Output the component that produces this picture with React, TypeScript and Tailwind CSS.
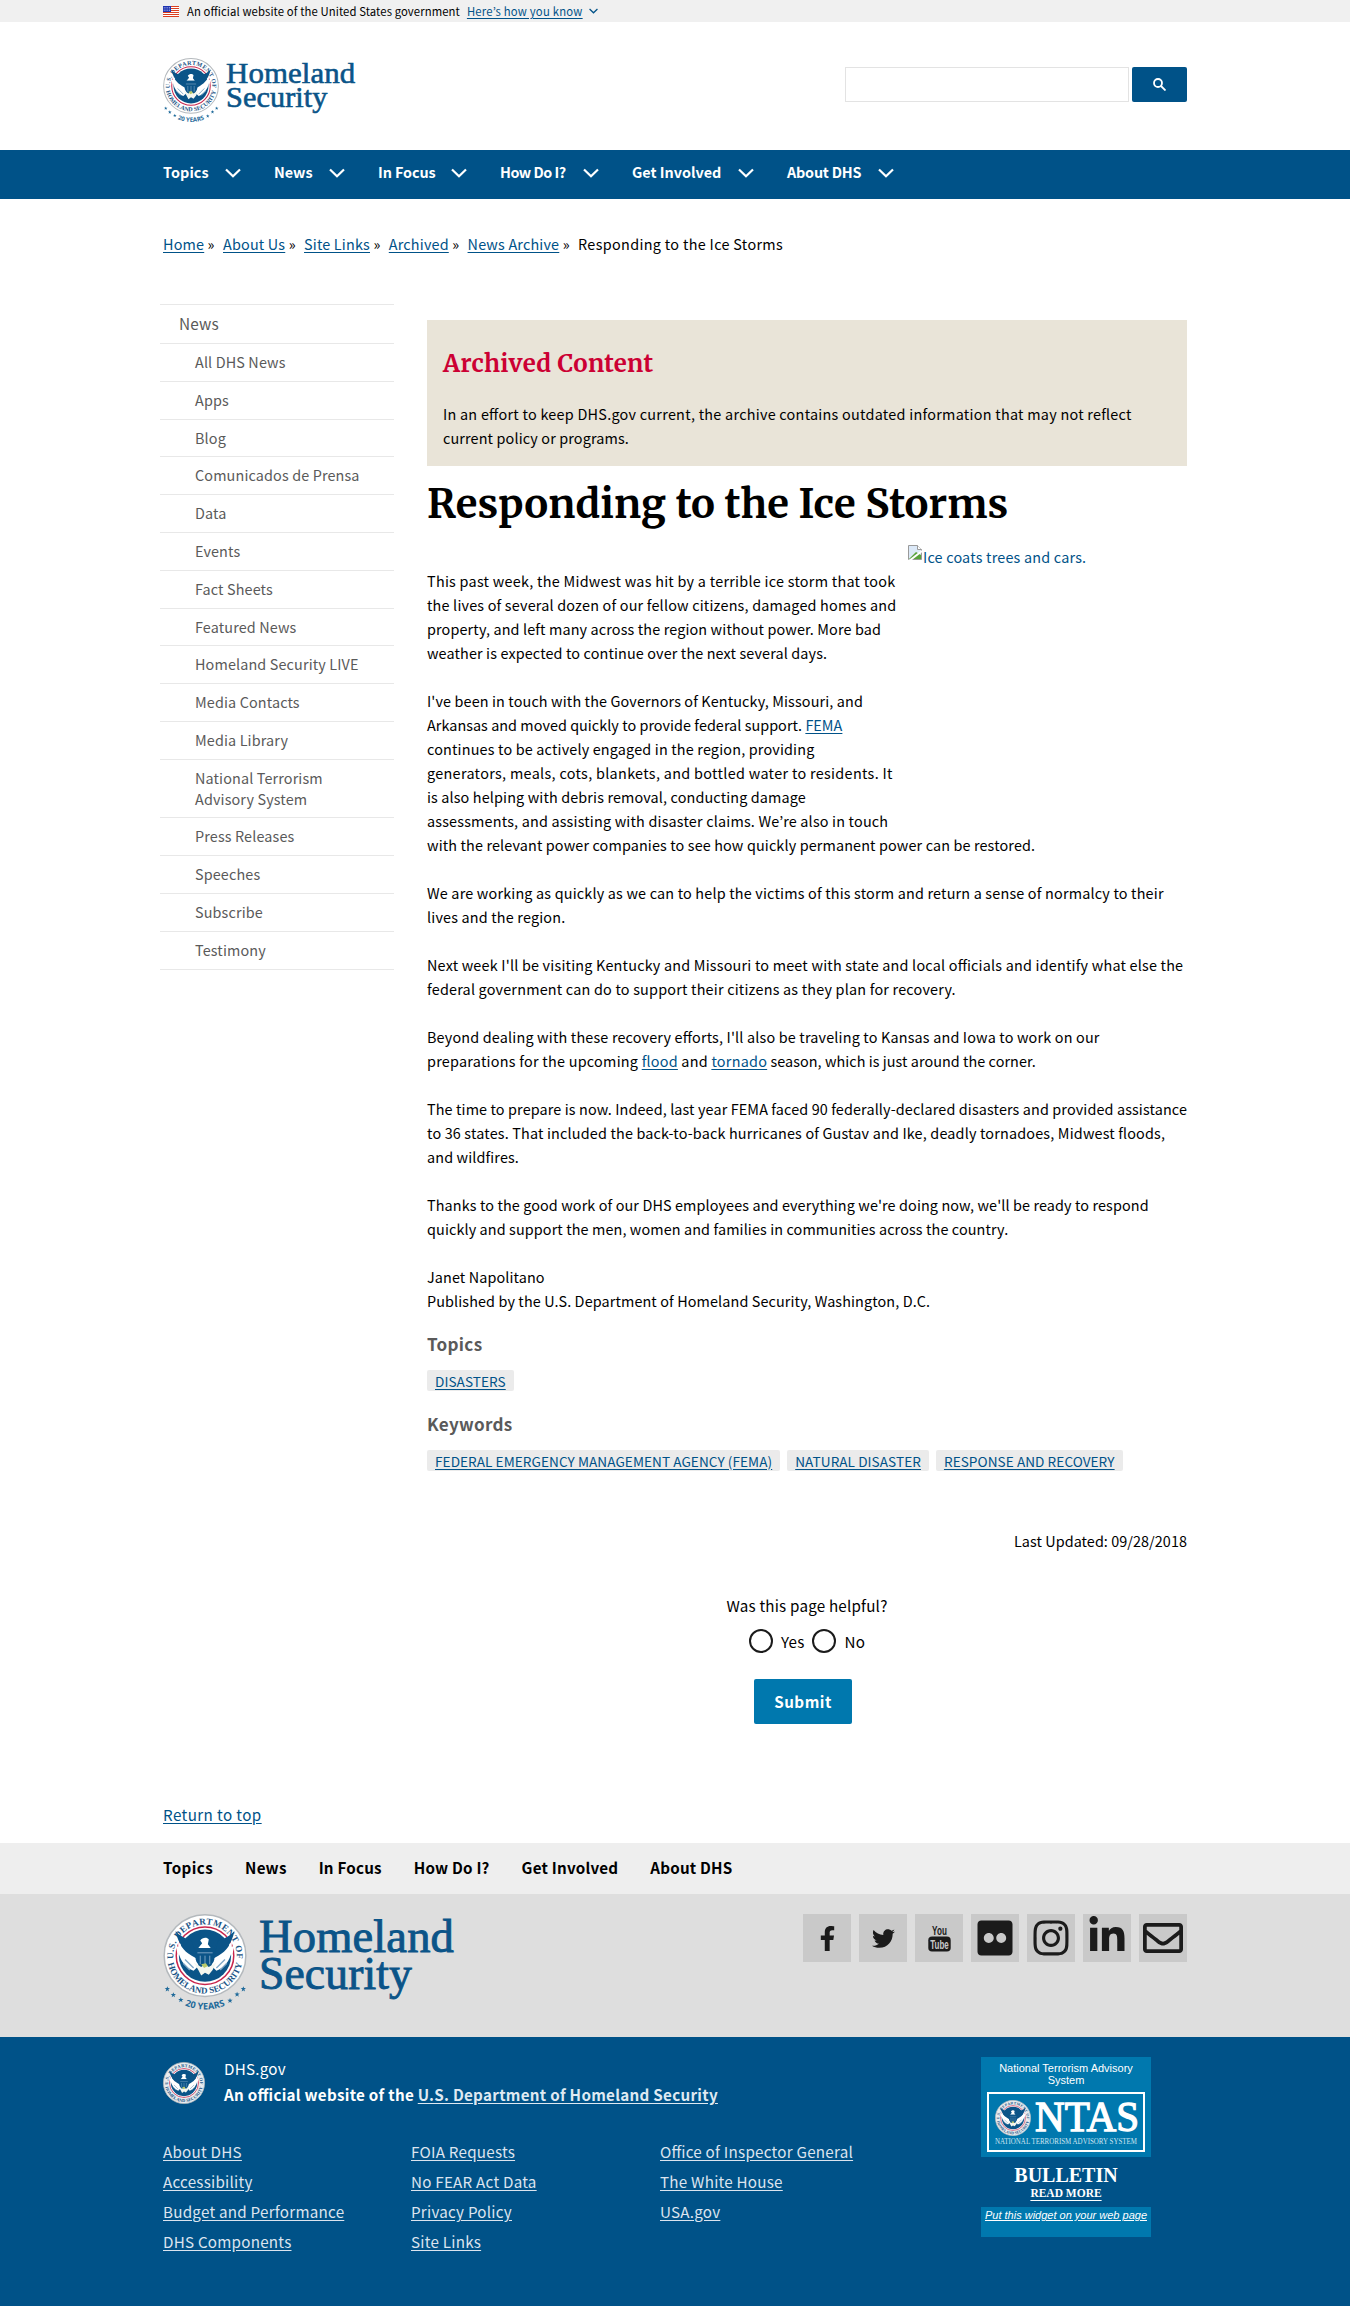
import type { ReactNode } from "react";
import { FaFacebookF, FaTwitter, FaFlickr, FaInstagram, FaLinkedinIn, FaRegEnvelope } from "react-icons/fa";

function Chevron({ className }: { className: string }) {
  return (
    <svg viewBox="0 0 16 10" className={className} fill="none" stroke="currentColor" strokeWidth="2.2">
      <path d="M1 1.5 8 8.2 15 1.5" />
    </svg>
  );
}

function Seal({ className, id, years = false, disc = "#fff" }: { className: string; id: string; years?: boolean; disc?: string }) {
  return (
    <svg viewBox={years ? "0 0 100 120" : "0 0 100 100"} overflow="visible" className={className}>
      <defs>
        <path id={`${id}-bottom`} d="M4.500 50 A45.500 45.500 0 0 0 95.500 50" />
        <path id={`${id}-upper`} d="M13.500 61 A38 38 0 1 1 86.500 61" />
        <path id={`${id}-years`} d="M-14.500 50 A64.500 64.500 0 0 0 114.500 50" />
      </defs>
      <circle cx="50" cy="50" r="49" fill={disc} stroke="#b4b9bd" strokeWidth="1.8" />
      <g fill="#1b5486" fontFamily="'Liberation Serif', serif" fontWeight="700">
        <text fontSize="10.8">
          <textPath href={`#${id}-upper`} startOffset="50%" textAnchor="middle" textLength="126">U.S. DEPARTMENT OF</textPath>
        </text>
        <text fontSize="10.8">
          <textPath href={`#${id}-bottom`} startOffset="50%" textAnchor="middle" textLength="124">HOMELAND SECURITY</textPath>
        </text>
      </g>
      <circle cx="50" cy="50" r="34.500" fill="#fff" stroke="#c8254c" strokeWidth="1.8" />
      {/* eagle: wings, head, shield and tail */}
      <g transform="translate(50 50) scale(1.14) translate(-50 -50)">
        <circle cx="50" cy="50" r="27.500" fill="#0b5488" />
        <path fill="#fff" d="M21 29c1 8 6 16 15 21l7 4v7l-5 5c-8-3-14-10-16-20l-1 2-2-9 3 2z" />
        <path fill="#fff" d="M79 29c-1 8-6 16-15 21l-7 4v7l5 5c8-3 14-10 16-20l1 2 2-9-3 2z" />
        <path fill="#0b5488" d="M19 24c4 5 10 8 17 10l4 14c-10-1-18-9-21-24z" />
        <path fill="#0b5488" d="M81 24c-4 5-10 8-17 10l-4 14c10-1 18-9 21-24z" />
        <path fill="#fff" d="M45 34c2-3 7-4 9-1l-1 5 3 4H43l4-5z" />
        <path fill="#0b5488" d="M40 42h20v10c0 6-5 10-10 12-5-2-10-6-10-12z" />
        <path stroke="#7fa7c6" strokeWidth="1" fill="none" d="M42 47h16M45 50v9M50 50v12M55 50v9" />
        <path fill="#f4f6ef" d="M38 57l8 5 4-3 4 3 8-5-4 8-4 5-4-2-4 3-3-6z" />
        <path fill="#b9c96a" d="M46 59l5-1 2 3-4 2z" />
        <path stroke="#7fa7c6" strokeWidth="1.4" fill="none" d="M27 58l7 7M29 54l9 9M73 58l-7 7M71 54l-9 9" />
      </g>
      {years && (
        <g fill="#1f6a9a">
          <text fontSize="11" fontWeight="700" fontFamily="'Noto Sans', sans-serif">
            <textPath href={`#${id}-years`} startOffset="50%" textAnchor="middle" textLength="50">20 YEARS</textPath>
          </text>
          {[[4.8, 90], [12, 97], [21, 103], [96, 90], [88.5, 96.5], [80, 104]].map(([x, y]) => (
            <path key={`${x}-${y}`} transform={`translate(${x} ${y}) scale(.36)`} d="M0-9 2.300-3h6.500L3.600 1.200 5.500 8 0 4-5.500 8-3.600 1.200-8.800-3h6.500z" />
          ))}
        </g>
      )}
    </svg>
  );
}

function Flag() {
  return (
    <svg viewBox="0 0 16 11" className="mr-2 h-[11px] w-4">
      <path fill="#fff" d="M0 0h16v11H0z" />
      <path stroke="#db3e1f" strokeWidth="1" d="M0 .5h16M0 2.500h16M0 4.500h16M0 6.500h16M0 8.500h16M0 10.500h16" />
      <path fill="#1e33b1" d="M0 0h8v6H0z" />
      <path stroke="#c7cdf0" strokeWidth=".8" strokeDasharray=".8 1" d="M.8 1.500h7M.8 3h7M.8 4.500h7" />
    </svg>
  );
}

function A({ children, className = "" }: { children: ReactNode; className?: string }) {
  return <a href="#" className={`text-[#005288] underline underline-offset-[2px] ${className}`}>{children}</a>;
}

function Wordmark({ className }: { className: string }) {
  return (
    <svg viewBox="0 0 196 92" overflow="visible" className={className} fill="#0b5488" stroke="#0b5488" strokeWidth=".9" fontFamily="'Liberation Serif', serif" fontSize="45.500">
      <text x="0" y="38" textLength="195" lengthAdjust="spacingAndGlyphs">Homeland</text>
      <text x="0" y="74.500" textLength="153" lengthAdjust="spacingAndGlyphs">Security</text>
    </svg>
  );
}

const topNav = [
  { label: "Topics", box: "w-[111px] tracking-[0.1px]" },
  { label: "News", box: "w-[104px] tracking-[0px]" },
  { label: "In Focus", box: "w-[122px] tracking-[-0.1px]" },
  { label: "How Do I?", box: "w-[132px] tracking-[-0.5px]" },
  { label: "Get Involved", box: "w-[155px] tracking-[0px]" },
  { label: "About DHS", box: "w-[140px] tracking-[-0.2px]" },
];
const crumbs = ["Home", "About Us", "Site Links", "Archived", "News Archive"];
const side = ["All DHS News", "Apps", "Blog", "Comunicados de Prensa", "Data", "Events", "Fact Sheets", "Featured News", "Homeland Security LIVE", "Media Contacts", "Media Library", "National Terrorism Advisory System", "Press Releases", "Speeches", "Subscribe", "Testimony"];
const keywords = ["FEDERAL EMERGENCY MANAGEMENT AGENCY (FEMA)", "NATURAL DISASTER", "RESPONSE AND RECOVERY"];
const footerCols = [
  ["About DHS", "Accessibility", "Budget and Performance", "DHS Components"],
  ["FOIA Requests", "No FEAR Act Data", "Privacy Policy", "Site Links"],
  ["Office of Inspector General", "The White House", "USA.gov"],
];

function Tag({ children }: { children: ReactNode }) {
  return (
    <span className="flex h-[21px] items-center rounded-[2px] bg-[#ebebeb] px-2 text-[13.6px] tracking-[0.06px]">
      <A>{children}</A>
    </span>
  );
}

function YouTube() {
  return (
    <svg viewBox="0 0 24 30" overflow="visible" className="h-[28px] w-[23px]" fontFamily="'Liberation Sans Narrow', 'Liberation Sans', sans-serif" fontWeight="700">
      <text x="4" y="12" fontSize="13.500" textLength="16" lengthAdjust="spacingAndGlyphs" fill="#1b1b1b">You</text>
      <rect x="0" y="13.500" width="24" height="16" rx="4" fill="#1b1b1b" />
      <text x="2" y="26.500" fontSize="13.500" textLength="20" lengthAdjust="spacingAndGlyphs" fill="#c9c9c9">Tube</text>
    </svg>
  );
}

function Social({ children }: { children: ReactNode }) {
  return <a href="#" className="flex h-12 w-12 items-center justify-center bg-[#c9c9c9] text-[#1b1b1b]">{children}</a>;
}

function Radio({ label }: { label: string }) {
  return (
    <label className="flex items-center gap-2">
      <span className="size-6 rounded-full border-2 border-[#1b1b1b] bg-white" />
      {label}
    </label>
  );
}

export default function App() {
  return (
    <div className="min-h-[2306px] bg-white font-['Noto_Sans_CJK_KR',sans-serif] text-[14.4px] leading-6 tracking-[0.13px] whitespace-nowrap text-black [font-feature-settings:'liga']">
      <div className="h-[22px] bg-[#f0f0f0]">
        <div className="mx-auto flex h-full w-[1024px] items-center text-[11.3px] tracking-[0.1px]">
          <Flag />
          <span>An official website of the United States government</span>
          <A className="ml-[7px] tracking-[0.22px]">Here’s how you know</A>
          <Chevron className="ml-1.5 h-[6px] w-[9px] text-[#005288]" />
        </div>
      </div>

      <header className="mx-auto flex h-32 w-[1024px] justify-between">
        <div className="flex pt-9">
          <Seal id="head" years className="h-[67px] w-[56px]" />
          <Wordmark className="ml-[7px] h-[61px] w-[130px]" />
        </div>
        <div className="flex items-start gap-[3px] pt-[45px]">
          <div className="h-[35px] w-[284px] border border-[#e3e3e3]" />
          <button className="flex h-[35px] w-[55px] items-center justify-center rounded-[2px] bg-[#005288]">
            <svg viewBox="0 0 13 13" className="size-[13px]" fill="none" stroke="#fff" strokeWidth="1.8">
              <circle cx="5" cy="5" r="4" />
              <path d="m8 8 4.500 4.500" />
            </svg>
          </button>
        </div>
      </header>

      <nav className="h-[49px] bg-[#005288]">
        <div className="mx-auto flex w-[1024px] pt-[10px] font-bold text-white">
          {topNav.map((t) => (
            <a key={t.label} href="#" className={`flex items-center justify-between pr-[33px] ${t.box}`}>
              {t.label}
              <Chevron className="h-[10px] w-4 translate-y-px" />
            </a>
          ))}
        </div>
      </nav>

      <div className="mx-auto flex w-[1024px] pt-[33px] tracking-[0.18px]">
        {crumbs.map((c) => (
          <span key={c} className="mr-[8.3px]"><A>{c}</A> »</span>
        ))}
        <span className="tracking-[0.33px]">Responding to the Ice Storms</span>
      </div>

      <div className="mx-auto flex w-[1030px] pr-[3px]">
        <aside className="mt-12 w-[234px] border-t border-[#e8e8e8] leading-[20.8px] tracking-[0.13px] text-[#5a5a5a]">
          <div className="border-b border-[#e8e8e8] px-[19px] pt-[7px] pb-[9px] text-[15.4px] leading-[22.1px]">News</div>
          {side.map((s) => (
            <div key={s} className="border-b border-[#e8e8e8] py-2 pr-5 pl-[35px] whitespace-normal">{s}</div>
          ))}
        </aside>

        <main className="mt-16 ml-[33px] w-[760px]">
          <div className="h-[146px] bg-[#e9e4d8] px-4">
            <h2 className="pt-[27px] font-[Merriweather,'Noto_Serif',serif] text-[24px] leading-[34px] font-bold tracking-[0.35px] text-[#cc0033]">Archived Content</h2>
            <p className="pt-[21px]">
              <span className="tracking-[0.26px]">In an effort to keep DHS.gov current, the archive contains outdated information that may not reflect</span>
              <br />
              current policy or programs.
            </p>
          </div>
          <h1 className="pt-[13px] font-[Merriweather,'Noto_Serif',serif] text-[40px] leading-[50px] font-bold tracking-[0.1px]">Responding to the Ice Storms</h1>
          <div className="float-right mt-[16px] flex h-[270px] w-[280px] text-[#005288]">
            <svg viewBox="0 0 16 16" className="size-4">
              <path fill="#dce9f8" stroke="#9a9a9a" d="M1.500 14.500v-14h9l4 4v10z" />
              <path fill="#fff" stroke="#9a9a9a" d="M10.500.5v4h4" />
              <path fill="#58a13a" d="M2 14l7-7 5 3v4z" />
              <path stroke="#fff" strokeWidth="2" d="m2 16 13-10" />
            </svg>
            <span className="tracking-[0.2px]">Ice coats trees and cars.</span>
          </div>
          <div className="space-y-6 pt-[40px]">
            <p>
              <span className="tracking-[0.26px]">This past week, the Midwest was hit by a terrible ice storm that took</span><br />
              <span className="tracking-[0.19px]">the lives of several dozen of our fellow citizens, damaged homes and</span><br />
              property, and left many across the region without power. More bad<br />
              weather is expected to continue over the next several days.
            </p>
            <p>
              I've been in touch with the Governors of Kentucky, Missouri, and<br />
              <span className="tracking-[0.04px]">Arkansas and moved quickly to provide federal support. <A>FEMA</A></span><br />
              <span className="tracking-[0.17px]">continues to be actively engaged in the region, providing</span><br />
              <span className="tracking-[0.32px]">generators, meals, cots, blankets, and bottled water to residents. It</span><br />
              is also helping with debris removal, conducting damage<br />
              <span className="tracking-[0.18px]">assessments, and assisting with disaster claims. We’re also in touch</span><br />
              with the relevant power companies to see how quickly permanent power can be restored.
            </p>
            <p className="tracking-[0.18px]">
              We are working as quickly as we can to help the victims of this storm and return a sense of normalcy to their<br />
              lives and the region.
            </p>
            <p className="tracking-[0.2px]">
              Next week I'll be visiting Kentucky and Missouri to meet with state and local officials and identify what else the<br />
              federal government can do to support their citizens as they plan for recovery.
            </p>
            <p className="tracking-[0.17px]">
              Beyond dealing with these recovery efforts, I'll also be traveling to Kansas and Iowa to work on our<br />
              <span className="tracking-[0.25px]">preparations for the upcoming <A>flood</A> and <A>tornado</A></span><span className="tracking-[0.05px]"> season, which is just around the corner.</span>
            </p>
            <p>
              <span className="tracking-[0.12px]">The time to prepare is now. Indeed, last year FEMA faced 90 federally-declared disasters and provided assistance</span><br />
              <span className="tracking-[0.17px]">to 36 states. That included the back-to-back hurricanes of Gustav and Ike, deadly tornadoes, Midwest floods,</span><br />
              and wildfires.
            </p>
            <p className="tracking-[0.11px]">
              Thanks to the good work of our DHS employees and everything we're doing now, we'll be ready to respond<br />
              quickly and support the men, women and families in communities across the country.
            </p>
            <p className="tracking-[0.11px]">
              Janet Napolitano<br />
              Published by the U.S. Department of Homeland Security, Washington, D.C.
            </p>
          </div>
          <h3 className="mt-[19px] text-[17.1px] leading-6 font-bold tracking-[0.3px] text-[#5a5a5a]">Topics</h3>
          <div className="mt-[14px] flex"><Tag>DISASTERS</Tag></div>
          <h3 className="mt-[21px] text-[17.1px] leading-6 font-bold tracking-[0.3px] text-[#5a5a5a]">Keywords</h3>
          <div className="mt-[14px] flex gap-[7px]">
            {keywords.map((k) => <Tag key={k}>{k}</Tag>)}
          </div>
          <p className="mt-[58px] text-right tracking-[0.06px]">Last Updated: 09/28/2018</p>
          <div className="mt-10 flex flex-col items-center text-[15.2px] tracking-[0.2px]">
            <p>Was this page helpful?</p>
            <div className="mt-3 flex gap-2">
              <Radio label="Yes" />
              <Radio label="No" />
            </div>
            <button className="mt-[26px] mr-2 h-[45px] w-[98px] rounded-[2px] bg-[#0078ae] pb-0.5 font-bold tracking-[0.5px] text-white">Submit</button>
          </div>
        </main>
      </div>

      <div className="mx-auto h-[119px] w-[1024px] pt-[78px] text-[15.2px] tracking-[0.4px]"><A>Return to top</A></div>

      <div className="h-[51px] bg-[#eeeeee]">
        <div className="mx-auto flex w-[1024px] gap-8 pt-[12px] text-[15.2px] font-bold tracking-[0.2px]">
          {topNav.map((t) => <a key={t.label} href="#" className={t.label === "Topics" ? "tracking-[0.4px]" : ""}>{t.label}</a>)}
        </div>
      </div>

      <div className="h-[143px] bg-[#dedede]">
        <div className="mx-auto flex w-[1024px] justify-between">
          <div className="flex pt-[20px]">
            <Seal id="foot" years className="h-[100px] w-[84px]" />
            <Wordmark className="ml-[12px] h-[92px] w-[196px]" />
          </div>
          <div className="flex gap-2 pt-5">
            <Social><FaFacebookF className="size-[25px]" /></Social>
            <Social><FaTwitter className="size-[23px]" /></Social>
            <Social><YouTube /></Social>
            <Social><FaFlickr className="size-[40px]" /></Social>
            <Social><FaInstagram className="size-[40px]" /></Social>
            <Social><FaLinkedinIn className="mb-1 size-[40px]" /></Social>
            <Social><FaRegEnvelope className="size-[40px]" /></Social>
          </div>
        </div>
      </div>

      <footer className="h-[269px] bg-[#005288] text-[15.2px] tracking-[0.24px]">
        <div className="mx-auto flex w-[1024px]">
          <div className="w-[818px] text-white">
            <div className="flex pt-[18px]">
              <Seal id="small" className="mt-[7px] h-[42px] w-[42px]" disc="#e8ecef" />
              <div className="ml-[19px] leading-[26px]">
                <p>DHS.gov</p>
                <p className="font-bold tracking-[0.28px]">
                  An official website of the <a href="#" className="text-[#dfe9f2] underline underline-offset-2">U.S. Department of Homeland Security</a>
                </p>
              </div>
            </div>
            <div className="grid grid-cols-[248px_249px_1fr] pt-[29px] leading-[30px]">
              {footerCols.map((col) => (
                <ul key={col[0]}>
                  {col.map((l) => (
                    <li key={l}><a href="#" className="text-[#dce4ef] underline underline-offset-2">{l}</a></li>
                  ))}
                </ul>
              ))}
            </div>
          </div>
          <div className="mt-5 w-[170px] text-center font-['Liberation_Sans',Arial,sans-serif] text-[11px] tracking-normal text-white">
            <div className="h-[100px] bg-[#0078ae] px-1.5 pt-[5px] leading-3">
              <p className="whitespace-normal">National Terrorism Advisory System</p>
              <svg viewBox="0 0 158 60" className="mt-[6px] h-[60px] w-[158px]" fontFamily="'Liberation Serif', serif">
                <rect x="1" y="1" width="156" height="58" fill="none" stroke="#fff" strokeWidth="2" />
                <text x="48" y="39" fontSize="42" textLength="104" lengthAdjust="spacingAndGlyphs" fill="#fff" stroke="#fff" strokeWidth="1.3">NTAS</text>
                <text x="8" y="52" fontSize="8" textLength="142" lengthAdjust="spacingAndGlyphs" fill="#cfe6f2">NATIONAL TERRORISM ADVISORY SYSTEM</text>
                <svg x="8" y="8" width="36" height="36"><Seal id="ntas" className="size-9" disc="#e8ecef" /></svg>
              </svg>
            </div>
            <div className="flex h-[50px] flex-col items-center pt-[7px] font-['Liberation_Serif',serif] font-bold">
              <p className="text-[20px] leading-[22px]">BULLETIN</p>
              <p className="text-[11.5px] leading-[14px] underline underline-offset-[3px]">READ MORE</p>
            </div>
            <div className="h-[30px] bg-[#0078ae] pt-[2px] leading-3 italic underline">Put this widget on your web page</div>
          </div>
        </div>
      </footer>
    </div>
  );
}
